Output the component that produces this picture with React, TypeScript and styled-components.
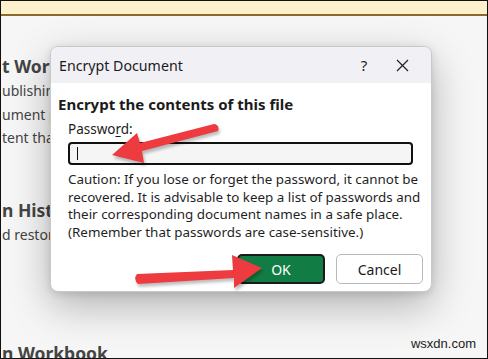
import React from 'react';
import styled, { createGlobalStyle } from 'styled-components';

const GlobalStyle = createGlobalStyle`
  html, body {
    margin: 0;
    padding: 0;
    background: #ffffff;
  }
  body {
    font-family: "Noto Sans", "Open Sans", sans-serif;
  }
`;

const Frame = styled.div`
  position: relative;
  width: 488px;
  height: 359px;
  box-sizing: border-box;
  border: 1px solid #111;
  overflow: hidden;
  background: #f6f6f6;
`;

const NoticeBar = styled.div`
  height: 13px;
  background: #fdf1cd;
  border-bottom: 2px solid #8a6a2a;
`;

const PageText = styled.div`
  display: flex;
  flex-direction: column;
  padding: 37px 0 0 1px;
  color: #444;
`;

const Heading = styled.div<{ $gap?: number }>`
  font-size: 17.5px;
  font-weight: 700;
  line-height: 26px;
  margin-top: ${(p) => p.$gap ?? 0}px;
  white-space: nowrap;
`;

const Line = styled.div`
  font-size: 14px;
  line-height: 23.5px;
  white-space: nowrap;
`;

const Dialog = styled.div`
  position: absolute;
  left: 49px;
  top: 45px;
  width: 382px;
  height: 246px;
  box-sizing: border-box;
  border: 1px solid #c9c9cc;
  border-radius: 8px;
  background: #fff;
  overflow: hidden;
  display: flex;
  flex-direction: column;
  box-shadow: 0 14px 40px rgba(0, 0, 0, 0.28), 0 2px 8px rgba(0, 0, 0, 0.12);
  color: #1b1b1b;
`;

const TitleBar = styled.div`
  height: 36px;
  flex-shrink: 0;
  background: #f0f0f5;
  display: flex;
  align-items: center;
  padding-left: 8px;
  font-size: 14.2px;
`;

const Title = styled.span`
  flex: 1;
`;

const TitleButton = styled.span<{ $width: number }>`
  width: ${(p) => p.$width}px;
  display: flex;
  justify-content: center;
  align-items: center;
  font-size: 15px;
  color: #222;
`;

const Body = styled.div`
  display: flex;
  flex-direction: column;
  padding: 11px 7px 0 7px;
`;

const BodyHeading = styled.div`
  font-size: 15px;
  font-weight: 700;
  line-height: 20px;
`;

const Fields = styled.div`
  display: flex;
  flex-direction: column;
  padding-left: 10px;
  padding-top: 6px;
`;

const Label = styled.label`
  font-size: 13.5px;
  line-height: 18px;
  u {
    text-decoration-thickness: 1px;
    text-underline-offset: 2px;
  }
`;

const PasswordBox = styled.div`
  margin-top: 4px;
  width: 345px;
  height: 23px;
  box-sizing: border-box;
  border: 2px solid #111;
  border-radius: 4px;
  background: #f5f5f5;
  display: flex;
  align-items: center;
  padding-left: 7px;
`;

const Caret = styled.span`
  width: 1px;
  height: 13px;
  background: #111;
`;

const Caution = styled.p`
  margin: 6px 0 0 0;
  font-size: 13.4px;
  line-height: 17.5px;
  color: #1f1f1f;
`;

const Buttons = styled.div`
  display: flex;
  justify-content: flex-end;
  gap: 11px;
  padding: 13px 1px 0 0;
`;

const Button = styled.button<{ $primary?: boolean }>`
  width: ${(p) => (p.$primary ? 88 : 87)}px;
  height: 30px;
  box-sizing: border-box;
  border-radius: 5px;
  font-family: "Noto Sans", sans-serif;
  font-size: 14px;
  cursor: pointer;
  background: ${(p) => (p.$primary ? '#117c43' : '#fff')};
  color: ${(p) => (p.$primary ? '#fff' : '#1b1b1b')};
  border: ${(p) => (p.$primary ? '2px solid #1a1a1a' : '1px solid #b9b9b9')};
`;

const Overlay = styled.svg`
  position: absolute;
  left: 0;
  top: 0;
  pointer-events: none;
`;

const Watermark = styled.div`
  position: absolute;
  right: 11px;
  bottom: 7px;
  font-family: "Liberation Sans", Arial, sans-serif;
  font-size: 13px;
  color: #222;
`;

const Arrow = ({ d }: { d: string }) => (
  <g>
    <path d={d} fill="#000" opacity="0.25" transform="translate(1.5 3)" filter="url(#blur)" />
    <path d={d} fill="#ee3b3f" />
  </g>
);

export default function App() {
  return (
    <Frame>
      <GlobalStyle />
      <NoticeBar />
      <PageText>
        <Heading>t Work</Heading>
        <Line>ublishin</Line>
        <Line>ument p</Line>
        <Line>tent tha</Line>
        <Heading $gap={47}>n Histo</Heading>
        <Line>d restore</Line>
        <Heading $gap={94}>n Workbook</Heading>
      </PageText>

      <Dialog>
        <TitleBar>
          <Title>Encrypt Document</Title>
          <TitleButton $width={18}>?</TitleButton>
          <TitleButton $width={58}>
            <svg width="13" height="13" viewBox="0 0 13 13">
              <path d="M1 1 L12 12 M12 1 L1 12" stroke="#222" strokeWidth="1.2" />
            </svg>
          </TitleButton>
        </TitleBar>
        <Body>
          <BodyHeading>Encrypt the contents of this file</BodyHeading>
          <Fields>
            <Label>
              Passwo<u>r</u>d:
            </Label>
            <PasswordBox>
              <Caret />
            </PasswordBox>
            <Caution>
              Caution: If you lose or forget the password, it cannot be recovered. It is advisable to keep a list of passwords and their corresponding document names in a safe place. (Remember that passwords are case-sensitive.)
            </Caution>
          </Fields>
          <Buttons>
            <Button $primary>OK</Button>
            <Button>Cancel</Button>
          </Buttons>
        </Body>
      </Dialog>

      <Overlay width="488" height="359" viewBox="0 0 488 359">
        <defs>
          <filter id="blur" x="-20%" y="-20%" width="140%" height="140%">
            <feGaussianBlur stdDeviation="1.5" />
          </filter>
        </defs>
        <Arrow d="M214 123 Q219 125 217 130 L141 150 L143 162 L111 154 L136 132 L139 142 L213 123 Z" />
        <Arrow d="M136 273 L232 269 L231 254 L261 267 L233 287 L233 277 L137 283 Q132 278 136 273 Z" />
      </Overlay>
      <Watermark>wsxdn.com</Watermark>
    </Frame>
  );
}
